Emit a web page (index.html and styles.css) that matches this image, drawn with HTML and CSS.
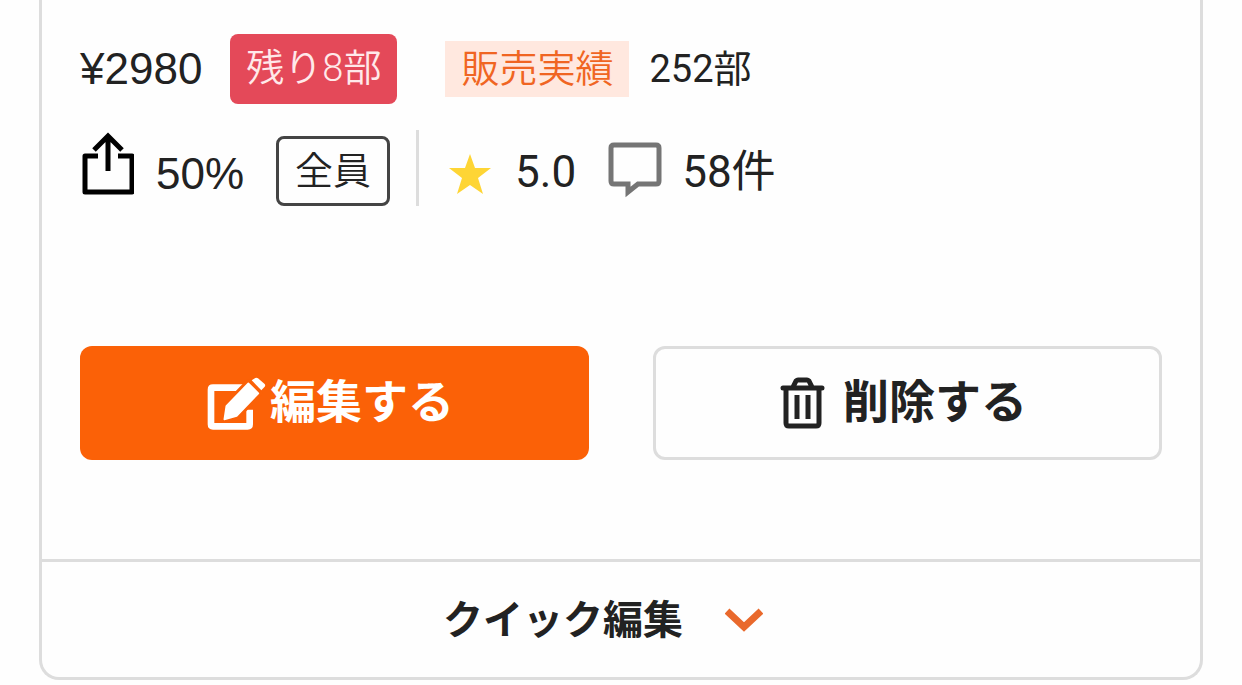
FILE: index.html
```html
<!DOCTYPE html>
<html lang="ja">
<head>
    <meta charset="UTF-8">
    <meta name="viewport" content="width=device-width, initial-scale=1">
    <title>クイック編集</title>
    <link rel="stylesheet" href="styles.css">
</head>
<body>
    <main class="card">
        <div class="card-body">
            <div class="row">
                <span class="price">¥2980</span>
                <span class="badge">残り8部</span>
                <span class="sales-label">販売実績</span>
                <span class="sales-count">252部</span>
            </div>

            <div class="row row-stats">
                <svg class="icon-share" viewBox="0 0 54 64" aria-hidden="true">
                    <path d="M18 24H5V60H52V24H38" fill="none" stroke="#000" stroke-width="5" stroke-linejoin="round"/>
                    <path d="M28 39V4M14 18L28 4L42 18" fill="none" stroke="#000" stroke-width="5"/>
                </svg>
                <span class="rate">50%</span>
                <span class="tag">全員</span>
                <span class="divider"></span>
                <svg class="icon-star" viewBox="0 0 42 40" aria-hidden="true">
                    <path d="M21 0L26 14H42L29 24L34 40L21 31L8 40L13 24L0 14H16Z" fill="#fed535"/>
                </svg>
                <span class="score">5.0</span>
                <svg class="icon-comment" viewBox="0 0 54 56" aria-hidden="true">
                    <path d="M6 3H48Q51 3 51 6V39Q51 42 48 42H30L20 50V42H6Q3 42 3 39V6Q3 3 6 3Z" fill="none" stroke="#757575" stroke-width="5"/>
                </svg>
                <span class="reviews">58件</span>
            </div>

            <div class="actions">
                <button type="button" class="btn btn-edit">
                    <svg class="icon-edit" viewBox="0 0 177 159" aria-hidden="true">
                        <path d="M112 32H18Q12 32 12 38V142Q12 148 18 148H122Q128 148 128 142V98" fill="none" stroke="#fff" stroke-width="20"/>
                        <path d="M58 87L124 19L154 49L89 117" fill="none" stroke="#fb6107" stroke-width="22" stroke-linejoin="round"/>
                        <path d="M52 127L58 87L124 19L154 49L89 117Z" fill="#fff" stroke="#fff" stroke-width="5" stroke-linejoin="round"/>
                        <path d="M134 10L145 3Q149 1 153 4L173 21Q176 25 173 29L163 40Z" fill="#fff"/>
                    </svg>
                    <span class="btn-text">編集する</span>
                </button>
                <button type="button" class="btn btn-delete">
                    <svg class="icon-trash" viewBox="0 0 45 52" aria-hidden="true">
                        <g fill="none" stroke="#222" stroke-width="5" stroke-linejoin="round">
                            <path d="M3 11H42M13 10L16 4Q17 3 18 3H27Q28 3 29 4L32 10" stroke-linecap="round"/>
                            <path d="M6 11V46Q6 49 9 49H36Q39 49 39 46V11"/>
                            <path d="M17 18V42M28 18V42"/>
                        </g>
                    </svg>
                    <span class="btn-text">削除する</span>
                </button>
            </div>
        </div>

        <button type="button" class="quick-edit">
            <span class="quick-text">クイック編集</span>
            <svg class="icon-chevron" viewBox="0 0 38 24" aria-hidden="true">
                <path d="M2 3L19 19L36 3" fill="none" stroke="#e9692c" stroke-width="7"/>
            </svg>
        </button>
    </main>
</body>
</html>
```

FILE: styles.css
```css
* {
    box-sizing: border-box;
}

body {
    margin: 0;
    background-color: #fefefe;
    color: #222;
    font-family: Roboto, "Noto Sans CJK JP", sans-serif;
    font-size: 38px;
    line-height: 48px;
}

.card {
    margin: 0 39px;
    border: 3px solid #ddd;
    border-top: none;
    border-radius: 0 0 20px 20px;
}

.card-body {
    padding: 34px 38px 99px;
}

.row {
    display: flex;
    align-items: center;
    white-space: nowrap;
}

.row-stats {
    height: 76px;
    margin-top: 26px;
}

.price,
.rate {
    font-family: "Liberation Sans", Arial, sans-serif;
    font-size: 44px;
}

.badge {
    margin-left: 28px;
    padding: 10px 16px 12px;
    border-radius: 8px;
    background-color: #e44959;
    color: #ffe9ea;
    font-weight: 350;
}

.sales-label {
    margin-left: 48px;
    padding: 4px 16px;
    background-color: #ffe8df;
    color: #f06522;
    font-weight: 350;
}

.sales-count {
    margin-left: 20px;
}

.icon-share {
    width: 54px;
    height: 64px;
    margin-bottom: 8px;
}

.rate {
    margin-left: 22px;
    padding-top: 12px;
}

.tag {
    align-self: flex-end;
    margin-left: 32px;
    padding: 8px 16px;
    border: 3px solid #444;
    border-radius: 8px;
    font-weight: 350;
}

.divider {
    width: 3px;
    height: 76px;
    margin-left: 26px;
    background-color: #ddd;
}

.icon-star {
    width: 42px;
    height: 40px;
    margin: 12px 0 0 30px;
}

.score,
.reviews {
    padding-top: 8px;
    font-size: 44px;
}

.score {
    margin-left: 24px;
}

.icon-comment {
    width: 54px;
    height: 56px;
    margin: 4px 0 0 32px;
}

.reviews {
    margin-left: 20px;
}

.actions {
    display: grid;
    grid-template-columns: 1fr 1fr;
    gap: 64px;
    margin-top: 140px;
}

button {
    display: flex;
    align-items: center;
    justify-content: center;
    border: none;
    background: none;
    color: #222;
    font-family: inherit;
    font-weight: bold;
    white-space: nowrap;
    cursor: pointer;
}

.btn {
    height: 114px;
    padding: 0 8px 0 0;
    border-radius: 12px;
    font-size: 46px;
}

.btn-text {
    padding-bottom: 10px;
}

.btn-edit {
    gap: 4px;
    background-color: #fb6107;
    color: #fff;
}

.btn-delete {
    gap: 18px;
    border: 3px solid #ddd;
}

.icon-edit {
    width: 59px;
    height: 53px;
}

.icon-trash {
    width: 45px;
    height: 52px;
}

.quick-edit {
    width: 100%;
    height: 118px;
    padding: 0;
    border-top: 3px solid #ddd;
    font-size: 40px;
}

.quick-text {
    padding-bottom: 6px;
}

.icon-chevron {
    width: 38px;
    height: 24px;
    margin: 0 36px 0 42px;
}
```
